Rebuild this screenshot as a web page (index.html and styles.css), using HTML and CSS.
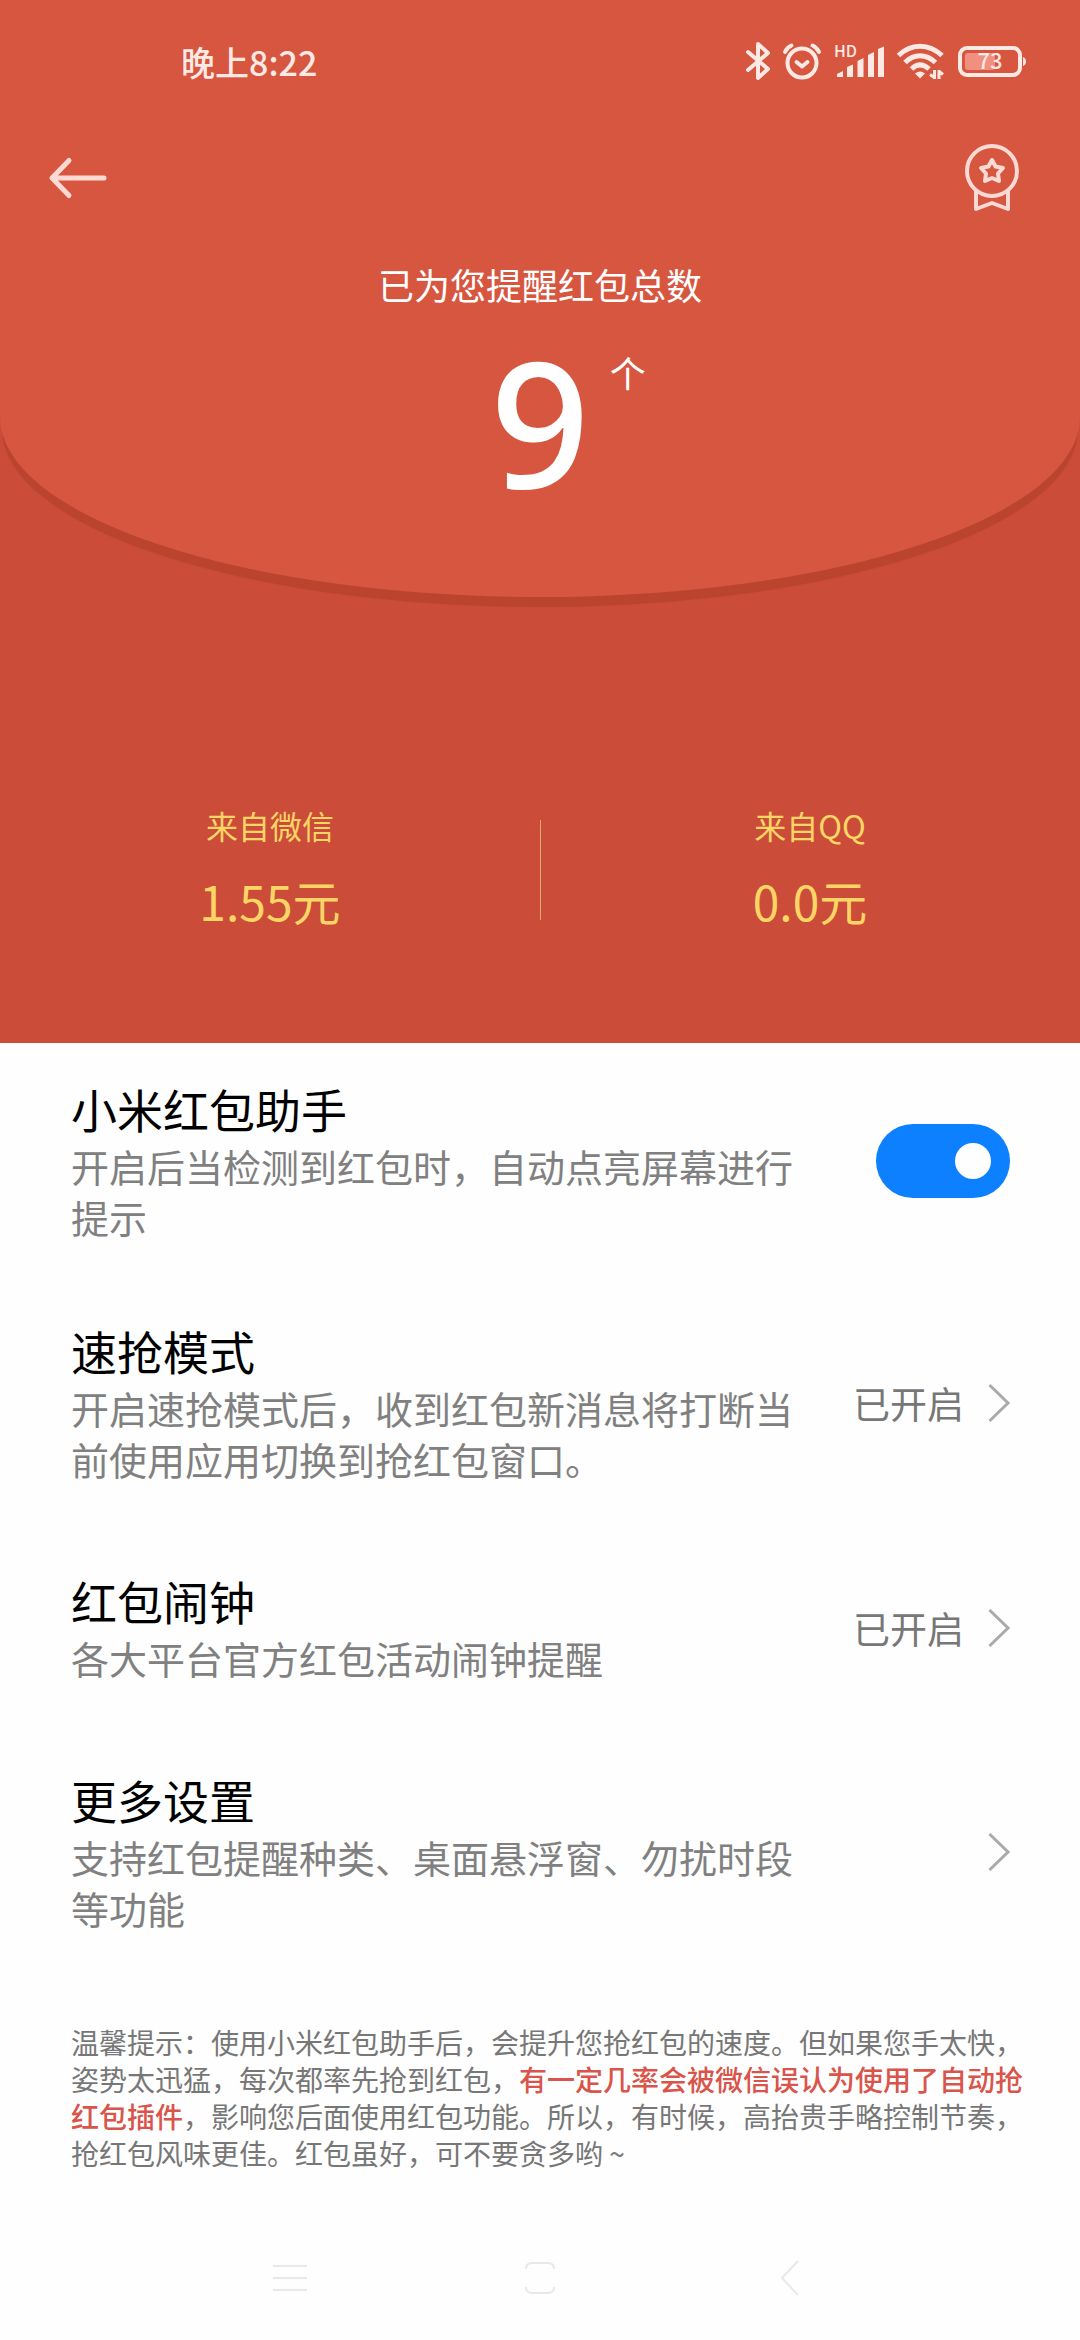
FILE: index.html
```html
<!DOCTYPE html>
<html lang="zh-CN">
<head>
<meta charset="utf-8">
<meta name="viewport" content="width=device-width, initial-scale=1">
<title>小米红包助手</title>
<link rel="stylesheet" href="styles.css">
</head>
<body>
<header class="hero">
  <div class="flap">
    <div class="status">
      <time class="clock">晚上8:22</time>
      <div class="status-icons">
        <svg width="24" height="40" viewBox="0 0 24 40" fill="none" stroke="currentColor" stroke-width="4" stroke-linejoin="round" stroke-linecap="round" aria-label="蓝牙"><path d="M2 11 L22 28 L12 37 V3 L22 12 L2 29"/></svg>
        <svg width="38" height="40" viewBox="0 0 38 40" fill="none" stroke="currentColor" stroke-width="4" stroke-linecap="round" stroke-linejoin="round" aria-label="闹钟"><circle cx="19" cy="22" r="14.500"/><path d="M13.500 21 L19 25.500 L24.500 21"/><path d="M2 11 Q4 6.500 8.500 4.500 M36 11 Q34 6.500 29.500 4.500"/></svg>
        <svg width="50" height="40" viewBox="0 0 50 40" fill="currentColor" aria-label="信号"><text class="hd" x="0" y="16">HD</text><path d="M3 33 L9 30 V36 H3Z M13 26 L19 23.500 V36 H13Z M23.500 20 L29.500 17 V36 H23.500Z M34 14 L40 11 V36 H34Z M44 8 L50 5.500 V36 H44Z"/></svg>
        <svg width="48" height="40" viewBox="0 0 48 40" fill="none" stroke="currentColor" stroke-width="5" aria-label="无线网络"><path d="M1.500 14.500 C14 2 32 2 45 14.500"/><path d="M8 21.500 C17 12.500 29 12.500 38.500 21.500"/><path d="M14.500 28 C20 22.500 26 22.500 32 28"/><path fill="currentColor" stroke="none" d="M18 32.500 Q23 28.500 28 32.500 L23 37.500Z"/><path stroke-width="3" d="M37.500 29 V38 M38 37 L33 33.500 M42 38 V29 M41.500 30 L46 33.500"/></svg>
        <svg width="68" height="40" viewBox="0 0 68 40" fill="none" aria-label="电量 73%"><rect x="2" y="7" width="60" height="27" rx="7" stroke="currentColor" stroke-width="4"/><rect x="7" y="12" width="30" height="17" rx="3" fill="#ef9080"/><path fill="currentColor" d="M65 16 Q68 17 68 20.500 T65 25Z"/><text class="charge" x="32" y="28" text-anchor="middle">73</text></svg>
      </div>
    </div>
    <nav class="toolbar">
      <button class="icon-button" type="button" aria-label="返回"><svg width="58" height="42" viewBox="0 0 58 42" fill="none" stroke="currentColor" stroke-width="5" stroke-linecap="round" stroke-linejoin="round"><path d="M20 3.500 L3 21 L20 38.500 M3 21 H55"/></svg></button>
      <button class="icon-button" type="button" aria-label="勋章"><svg width="54" height="68" viewBox="0 0 54 68" fill="none" stroke="currentColor" stroke-width="4"><circle cx="27" cy="27" r="25"/><path stroke-linejoin="round" d="M11 47 V65 L27 59 L43 65 V47"/><path stroke-linejoin="round" d="M27 16 L30.500 22.500 L38 24 L33 29.500 L34 37 L27 34 L20 37 L21 29.500 L16 24 L23.500 22.500Z"/></svg></button>
    </nav>
    <p class="caption">已为您提醒红包总数</p>
    <p class="count"><span class="count-number">9</span><span class="count-unit">个</span></p>
  </div>
  <dl class="sources">
    <div class="source"><dt>来自微信</dt><dd>1.55元</dd></div>
    <div class="source"><dt>来自QQ</dt><dd>0.0元</dd></div>
  </dl>
</header>
<main>
  <label class="row row-main">
    <span class="text"><span class="title">小米红包助手</span><span class="desc">开启后当检测到红包时，自动点亮屏幕进行提示</span></span>
    <input class="switch" type="checkbox" checked>
  </label>
  <a class="row" href="#quick">
    <span class="text"><span class="title">速抢模式</span><span class="desc">开启速抢模式后，收到红包新消息将打断当前使用应用切换到抢红包窗口。</span></span>
    <span class="value">已开启</span>
    <svg class="chevron" width="22" height="40" viewBox="0 0 22 40"><path d="M1.500 2 L20 20 L1.500 38"/></svg>
  </a>
  <a class="row" href="#alarm">
    <span class="text"><span class="title">红包闹钟</span><span class="desc">各大平台官方红包活动闹钟提醒</span></span>
    <span class="value">已开启</span>
    <svg class="chevron" width="22" height="40" viewBox="0 0 22 40"><path d="M1.500 2 L20 20 L1.500 38"/></svg>
  </a>
  <a class="row" href="#more">
    <span class="text"><span class="title">更多设置</span><span class="desc">支持红包提醒种类、桌面悬浮窗、勿扰时段等功能</span></span>
    <svg class="chevron" width="22" height="40" viewBox="0 0 22 40"><path d="M1.500 2 L20 20 L1.500 38"/></svg>
  </a>
  <p class="note">温馨提示：使用小米红包助手后，会提升您抢红包的速度。但如果您手太快，姿势太迅猛，每次都率先抢到红包，<strong>有一定几率会被微信误认为使用了自动抢红包插件</strong>，影响您后面使用红包功能。所以，有时候，高抬贵手略控制节奏，抢红包风味更佳。红包虽好，可不要贪多哟 ~</p>
</main>
<nav class="system-nav">
  <button class="icon-button" type="button" aria-label="最近任务"><svg width="36" height="36" viewBox="0 0 36 36"><path d="M1 6 H35 M1 18 H35 M1 30 H35"/></svg></button>
  <button class="icon-button" type="button" aria-label="主屏幕"><svg width="36" height="36" viewBox="0 0 36 36"><path d="M4 9 Q4 3 10 3 H26 Q32 3 32 9 M4 27 Q4 33 10 33 H26 Q32 33 32 27"/></svg></button>
  <button class="icon-button" type="button" aria-label="返回上一页"><svg width="36" height="36" viewBox="0 0 36 36"><path d="M26 1 L10 18 L26 35"/></svg></button>
</nav>
</body>
</html>
```
FILE: styles.css
```css
* {
  box-sizing: border-box;
}

body {
  margin: 0;
  min-height: 100vh;
  display: flex;
  flex-direction: column;
  background: #fefefe;
  color: #000;
  font-family: "Noto Sans CJK SC", "Noto Sans", sans-serif;
}

p, dl, dd {
  margin: 0;
}

svg {
  display: block;
  flex: none;
  overflow: visible;
}

.hero {
  background: #cb4c39;
}

.flap {
  padding-bottom: 86px;
  background: #d7563f;
  border-radius: 0 0 50% 50% / 0 0 180px 180px;
  box-shadow: 0 12px 1px -2px #ba442e;
  color: #fff;
}

.status {
  display: flex;
  align-items: center;
  justify-content: space-between;
  height: 122px;
  padding: 0 54px 0 181px;
  color: #ffe9e4;
}

.clock {
  font-size: 34px;
  font-weight: 500;
}

.status-icons {
  display: flex;
  gap: 13px;
}

.hd {
  font: 500 16px "Noto Sans CJK SC", sans-serif;
}

.charge {
  font: 500 22px "Noto Sans CJK SC", sans-serif;
  fill: currentColor;
}

.toolbar {
  display: flex;
  align-items: center;
  justify-content: space-between;
  height: 112px;
  padding: 0 61px 0 49px;
  color: #ffd9d3;
}

.icon-button {
  padding: 0;
  border: 0;
  background: none;
  color: inherit;
}

.caption {
  margin-top: 23px;
  font-size: 36px;
  line-height: 54px;
  text-align: center;
}

.count {
  display: grid;
  grid-template-columns: 1fr auto 1fr;
  padding-top: 20px;
}

.count-number {
  grid-column: 2;
  font-family: "Noto Sans", sans-serif;
  font-size: 174px;
  font-weight: 500;
  line-height: 180px;
}

.count-unit {
  padding: 14px 0 0 20px;
  font-size: 36px;
  line-height: 54px;
}

.sources {
  display: grid;
  grid-template-columns: 1fr 1fr;
  padding: 204px 0 109px;
  background: linear-gradient(#e5ae68, #e5ae68) 50% 223px / 1px 100px no-repeat;
  color: #fdd565;
  text-align: center;
}

.source dt {
  font-size: 32px;
  line-height: 48px;
}

.source dd {
  margin-top: 17px;
  font-size: 48px;
  line-height: 68px;
}

.row {
  display: flex;
  align-items: center;
  padding: 40px 70px 40px 71px;
  color: inherit;
  text-decoration: none;
}

.row-main {
  padding-block: 33px 32px;
}

.text {
  flex: 1;
  padding-bottom: 4px;
}

.title, .desc {
  display: block;
}

.title {
  font-size: 46px;
  line-height: 64px;
}

.desc {
  max-width: 730px;
  color: #808080;
  font-size: 38px;
  line-height: 51px;
}

.value {
  margin-right: 24px;
  color: #777;
  font-size: 37px;
}

.chevron {
  fill: none;
  stroke: #aaa;
  stroke-width: 3;
}

.switch {
  appearance: none;
  display: flex;
  align-items: center;
  justify-content: flex-end;
  width: 134px;
  height: 74px;
  margin: 0;
  padding-right: 19px;
  border-radius: 37px;
  background: #0d80ff;
}

.switch::before {
  content: "";
  width: 36px;
  height: 36px;
  border-radius: 50%;
  background: #fefefe;
}

.switch:not(:checked) {
  justify-content: flex-start;
  padding: 0 0 0 19px;
  background: #ddd;
}

.note {
  padding: 47px 50px 0 71px;
  color: #777;
  font-size: 28px;
  line-height: 37px;
}

.note strong {
  color: #d9544a;
  font-weight: 500;
}

.system-nav {
  display: flex;
  justify-content: center;
  gap: 214px;
  margin-top: auto;
  padding: 44px 0;
}

.system-nav path {
  fill: none;
  stroke: #e8e8e8;
  stroke-width: 2;
}
```
